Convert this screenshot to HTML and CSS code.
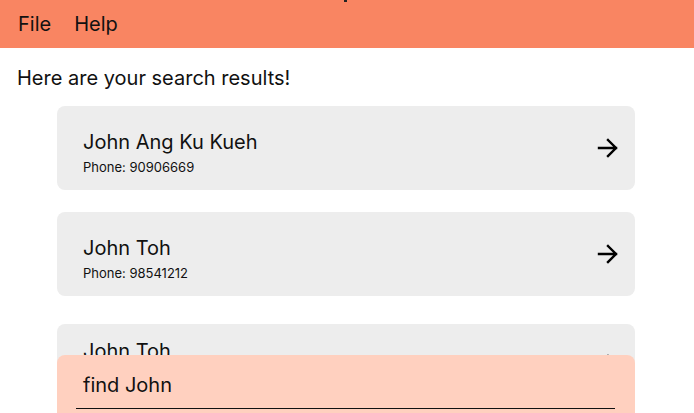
FILE: index.html
```html
<!DOCTYPE html>
<html>
<head>
<meta charset="utf-8">
<link rel="stylesheet" href="styles.css">
</head>
<body>
<div class="app">
  <header class="menubar">
    <span class="menu-item">File</span>
    <span class="menu-item">Help</span>
    <span class="tick"></span>
  </header>
  <p class="intro">Here are your search results!</p>
  <div class="list">
    <div class="card">
      <div class="info">
        <div class="name">John Ang Ku Kueh</div>
        <div class="phone">Phone: 90906669</div>
      </div>
      <svg class="arrow" viewBox="0 0 22 22" width="22" height="22"><path d="M2 11 H19 M11 3 L19 11 L11 19" fill="none" stroke="#000" stroke-width="2.4" stroke-linecap="square"/></svg>
    </div>
    <div class="card">
      <div class="info">
        <div class="name">John Toh</div>
        <div class="phone">Phone: 98541212</div>
      </div>
      <svg class="arrow" viewBox="0 0 22 22" width="22" height="22"><path d="M2 11 H19 M11 3 L19 11 L11 19" fill="none" stroke="#000" stroke-width="2.4" stroke-linecap="square"/></svg>
    </div>
    <div class="card card-tall">
      <div class="info">
        <div class="name">John Toh</div>
      </div>
      <svg class="arrow" viewBox="0 0 22 22" width="22" height="22"><path d="M2 11 H19 M11 3 L19 11 L11 19" fill="none" stroke="#000" stroke-width="2.4" stroke-linecap="square"/></svg>
    </div>
  </div>
  <div class="command">
    <div class="command-input">find John</div>
  </div>
</div>
</body>
</html>
```
FILE: styles.css
```css
* { box-sizing: border-box; }
html, body {
  margin: 0;
  padding: 0;
  width: 694px;
  height: 413px;
  overflow: hidden;
  background: #fff;
  font-family: Inter, "Noto Sans", sans-serif;
  color: #111;
}
.app {
  position: relative;
  width: 694px;
  height: 413px;
  overflow: hidden;
}
.menubar {
  position: relative;
  height: 48px;
  background: #f98562;
  display: flex;
  align-items: center;
  gap: 23px;
  padding: 0 0 0 18px;
  font-size: 20px;
}
.menu-item { line-height: 24px; }
.tick {
  position: absolute;
  left: 344px;
  top: 0;
  width: 3px;
  height: 2px;
  background: #222;
}
.intro {
  margin: 0;
  padding: 18px 0 0 17px;
  font-size: 20px;
  line-height: 24px;
}
.list {
  display: flex;
  flex-direction: column;
  gap: 22px;
  padding: 16px 0 0 57px;
  width: 635px;
}
.card {
  height: 84px;
  background: #ededed;
  border-radius: 8px;
  display: flex;
  align-items: center;
  justify-content: space-between;
  padding: 0 16px 0 26px;
}
.card .info { padding-top: 9px; }
.card-tall {
  margin-top: 6px;
  height: 110px;
  align-items: flex-start;
  padding-top: 14px;
}
.card-tall .info { padding-top: 0; }
.card-tall .arrow { margin-top: 15px; }
.info { display: flex; flex-direction: column; }
.name {
  font-size: 20px;
  line-height: 26px;
}
.phone {
  font-size: 13px;
  line-height: 17px;
  margin-top: 4px;
}
.arrow { display: block; }
.command {
  position: absolute;
  left: 57px;
  top: 355px;
  width: 578px;
  height: 80px;
  background: #ffd0bf;
  border-radius: 8px 8px 0 0;
  padding: 17px 20px 0 19px;
}
.command-input {
  font-size: 20px;
  line-height: 27px;
  padding: 0 0 9px 7px;
  border-bottom: 1px solid #111;
}
```
